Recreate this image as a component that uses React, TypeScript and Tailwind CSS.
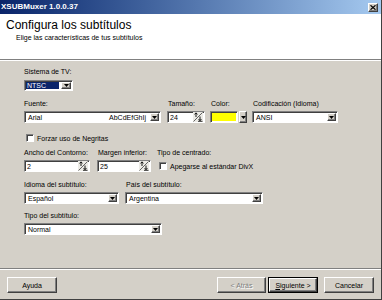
import React from "react";

const sunken =
  "border border-t-[#808080] border-l-[#808080] border-b-white border-r-white shadow-[inset_1px_1px_0_#404040] bg-white";
const raised =
  "border border-t-white border-l-white border-b-[#404040] border-r-[#404040] shadow-[inset_-1px_-1px_0_#808080] bg-[#d4d0c8]";

function Label({ children, className = "" }: { children: React.ReactNode; className?: string }) {
  return <div className={"h-[8px] text-[7px] leading-[8px] whitespace-nowrap " + className}>{children}</div>;
}

function DropBtn({ w = "w-[9px]" }: { w?: string }) {
  return (
    <div className={raised + " " + w + " h-full flex items-center justify-center shrink-0"}>
      <svg width="5" height="3" viewBox="0 0 5 3">
        <path d="M0 0H5L2.5 3Z" fill="#000" />
      </svg>
    </div>
  );
}

function Select({ text, className = "" }: { text: string; className?: string }) {
  return (
    <div className={sunken + " h-[12px] flex items-stretch p-[1px] " + className}>
      <div className="flex-1 flex items-center pl-[2px] text-[7px] leading-none whitespace-nowrap">{text}</div>
      <DropBtn />
    </div>
  );
}

function Spin() {
  return (
    <svg width="10" height="10" viewBox="0 0 10 10" className="shrink-0">
      <rect x="0" y="0" width="10" height="10" fill="#ecebe6" />
      <path d="M0.5 9.5L9.5 0.5" stroke="#404040" strokeWidth="0.8" />
      <path d="M3 5V1M1.6 2.4L3 0.8L4.4 2.4" stroke="#000" strokeWidth="0.9" fill="none" />
      <path d="M7 4.5V8.5M5.6 7.1L7 8.7L8.4 7.1" stroke="#000" strokeWidth="0.9" fill="none" />
      <path d="M5 9.3H9.5" stroke="#000" strokeWidth="0.8" />
    </svg>
  );
}

function SpinField({ text, className = "" }: { text: string; className?: string }) {
  return (
    <div className={sunken + " h-[12px] flex items-center pl-[2px] pr-[1px] " + className}>
      <div className="flex-1 text-[7px] leading-none">{text}</div>
      <Spin />
    </div>
  );
}

function Check() {
  return <div className={sunken + " w-[8px] h-[8px] shrink-0"} />;
}

function Button({ children, disabled = false, def = false, className = "" }: { children: React.ReactNode; disabled?: boolean; def?: boolean; className?: string }) {
  const inner = (
    <div
      className={
        raised +
        " w-full h-full flex items-center justify-center text-[7px] leading-none " +
        (disabled ? "text-[#808080] [text-shadow:1px_1px_0_#fff]" : "text-black")
      }
    >
      {children}
    </div>
  );
  if (def) {
    return <div className={"border border-black h-[16px] " + className}>{inner}</div>;
  }
  return <div className={"h-[16px] " + className}>{inner}</div>;
}

export default function App() {
  return (
    <div className="w-[382px] h-[300px] overflow-hidden bg-[#d4d0c8] flex flex-col border-r border-b border-[#404040] font-['Liberation_Sans',Arial,sans-serif] text-black">
      {/* Title bar */}
      <div className="h-[14px] shrink-0 flex items-center bg-linear-to-r from-[#0a246a] to-[#a6caf0] pl-[1px] pr-[3px]">
        <span className="text-[8px] font-bold text-white leading-none">XSUBMuxer 1.0.0.37</span>
        <div className={raised + " ml-auto w-[10px] h-[9px] flex items-center justify-center"}>
          <svg width="6" height="5" viewBox="0 0 6 5">
            <path d="M0.5 0.3L5.5 4.7M5.5 0.3L0.5 4.7" stroke="#000" strokeWidth="1.2" />
          </svg>
        </div>
      </div>

      {/* Header */}
      <div className="h-[45px] shrink-0 bg-white pl-[6px] pt-[5px]">
        <div className="text-[12px] leading-none whitespace-nowrap">Configura los subtítulos</div>
        <div className="ml-[10px] mt-[3px] text-[7px] leading-none whitespace-nowrap">Elige las características de tus subtítulos</div>
      </div>
      <div className="h-px shrink-0 bg-[#808080]" />
      <div className="h-px shrink-0 bg-white" />

      {/* Body */}
      <div className="flex-1 flex flex-col pl-[24px] pt-[7px]">
        <Label>Sistema de TV:</Label>
        <div className={sunken + " mt-[4px] w-[49px] h-[11px] flex items-stretch p-[1px]"}>
          <div className="flex-1 mr-[2px] bg-[#0a246a] text-white text-[7px] leading-none flex items-center pl-[1px]">NTSC</div>
          <DropBtn w="w-[10px]" />
        </div>

        {/* Row 1 */}
        <div className="mt-[9px] flex">
          <div className="w-[137px] flex flex-col">
            <Label>Fuente:</Label>
            <div className={sunken + " mt-[3px] h-[12px] flex items-stretch p-[1px]"}>
              <div className="flex-1 flex items-center pl-[2px] pr-[4px] text-[7px] leading-none whitespace-nowrap">
                <span>Arial</span>
                <span className="ml-auto">AbCdEfGhIj</span>
              </div>
              <DropBtn />
            </div>
          </div>
          <div className="w-[38px] ml-[6px] flex flex-col">
            <Label className="pl-[1px]">Tamaño:</Label>
            <SpinField text="24" className="mt-[3px]" />
          </div>
          <div className="w-[37px] ml-[5px] flex flex-col">
            <Label className="pl-[1px]">Color:</Label>
            <div className="mt-[3px] h-[12px] flex">
              <div className={sunken + " w-[28px] h-full p-[1px]"}>
                <div className="w-full h-full bg-[#ffff00]" />
              </div>
              <div className="ml-[1px] h-full">
                <DropBtn w="w-[8px]" />
              </div>
            </div>
          </div>
          <div className="w-[86px] ml-[5px] flex flex-col">
            <Label className="pl-[1px]">Codificación (Idioma)</Label>
            <Select text="ANSI" className="mt-[3px]" />
          </div>
        </div>

        {/* Checkbox */}
        <div className="mt-[11px] h-[8px] flex items-center pl-[2px]">
          <Check />
          <span className="ml-[3px] text-[7px] leading-none whitespace-nowrap">Forzar uso de Negritas</span>
        </div>

        {/* Row 3 */}
        <div className="mt-[7px] flex">
          <div className="w-[66px] flex flex-col">
            <Label>Ancho del Contorno:</Label>
            <SpinField text="2" className="mt-[3px]" />
          </div>
          <div className="w-[54px] ml-[7px] flex flex-col">
            <Label className="pl-[1px]">Margen inferior:</Label>
            <SpinField text="25" className="mt-[3px]" />
          </div>
          <div className="ml-[6px] flex flex-col">
            <Label>Tipo de centrado:</Label>
            <div className="mt-[3px] h-[12px] flex items-center pl-[2px]">
              <Check />
              <span className="ml-[3px] text-[7px] leading-none whitespace-nowrap">Apegarse al estándar DivX</span>
            </div>
          </div>
        </div>

        {/* Row 4 */}
        <div className="mt-[9px] flex">
          <div className="w-[95px] flex flex-col">
            <Label>Idioma del subtítulo:</Label>
            <Select text="Español" className="mt-[3px]" />
          </div>
          <div className="w-[138px] ml-[6px] flex flex-col">
            <Label className="pl-[1px]">País del subtítulo:</Label>
            <Select text="Argentina" className="mt-[3px]" />
          </div>
        </div>

        {/* Row 5 */}
        <div className="mt-[8px] w-[138px] flex flex-col">
          <Label>Tipo del subtítulo:</Label>
          <Select text="Normal" className="mt-[3px]" />
        </div>
      </div>

      <div className="h-px shrink-0 bg-[#808080]" />
      <div className="h-px shrink-0 bg-white" />

      {/* Footer */}
      <div className="h-[29px] shrink-0 flex items-start pt-[7px] pl-[7px] pr-[7px]">
        <Button className="w-[50px]">Ayuda</Button>
        <div className="ml-auto flex">
          <Button disabled className="w-[49px]">&lt; Atrás</Button>
          <Button def className="w-[50px] ml-[2px]">
            <span><span className="underline">S</span>iguiente &gt;</span>
          </Button>
          <Button className="w-[50px] ml-[6px]">Cancelar</Button>
        </div>
      </div>
    </div>
  );
}
